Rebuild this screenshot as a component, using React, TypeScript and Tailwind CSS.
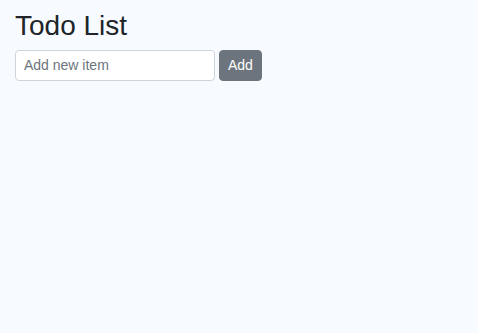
export default function App() {
  return (
    <div
      className="min-h-screen bg-[#f7fbff] px-[15px] pt-[9px] text-[#212529]"
      style={{ fontFamily: '"Liberation Sans", Arial, sans-serif' }}
    >
      <h1 className="mb-[7px] text-[28px] font-normal leading-[1.2]">Todo List</h1>
      <div className="flex items-start gap-[4px]">
        <input
          type="text"
          placeholder="Add new item"
          className="h-[31px] w-[200px] rounded-[4px] border border-[#ced4da] bg-white px-2 text-[14px] text-[#495057] placeholder:text-[#6c757d] outline-none"
        />
        <button className="h-[31px] rounded-[4px] border border-[#6c757d] bg-[#6c757d] px-2 text-[14px] text-white">
          Add
        </button>
      </div>
    </div>
  );
}
